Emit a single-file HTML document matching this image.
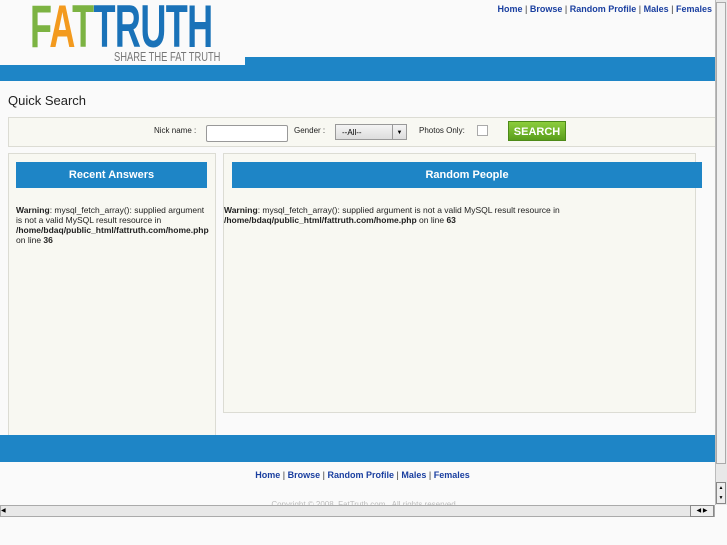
<!DOCTYPE html><html><head><style>
body{margin:0;width:727px;height:545px;background:#fafafa;font-family:"Liberation Sans",sans-serif;position:relative;overflow:hidden}
.a{position:absolute}
a{color:#1a3fa0;text-decoration:none;font-weight:bold}
.nav{font-size:9px;color:#333}
.box{background:#f8f8f2;border:1px solid #dcdcd4}
.hd{background:#1e85c6;color:#fff;font-weight:bold;font-size:11px;text-align:center}
.w{font-size:8.5px;color:#222;line-height:10px}
</style></head><body>
<div class="a" style="left:30px;top:-3px;font-size:60px;font-weight:bold;letter-spacing:-1px;line-height:60px;transform:scaleX(0.6);transform-origin:0 0;white-space:nowrap"><span style="color:#7cb342">F</span><span style="color:#f39a1e">A</span><span style="color:#7cb342">T</span><span style="color:#1a72b8">TRUTH</span></div>
<div class="a" style="left:114px;top:49px;font-size:13px;color:#777;transform:scaleX(0.72);transform-origin:0 0;white-space:nowrap">SHARE THE FAT TRUTH</div>
<div class="a nav" style="right:15px;top:4px"><a>Home</a> | <a>Browse</a> | <a>Random Profile</a> | <a>Males</a> | <a>Females</a></div>
<div class="a" style="left:0;top:65px;width:715px;height:16px;background:#1e85c6"></div>
<div class="a" style="left:245px;top:57px;width:470px;height:10px;background:#1e85c6"></div>
<div class="a" style="left:8px;top:93px;font-size:13px;color:#222">Quick Search</div>
<div class="a box" style="left:8px;top:117px;width:706px;height:28px"></div>
<div class="a" style="left:154px;top:126px;font-size:8px;color:#222">Nick name :</div>
<div class="a" style="left:206px;top:125px;width:80px;height:15px;background:#fff;border:1px solid #999;border-radius:2px"></div>
<div class="a" style="left:294px;top:126px;font-size:8px;color:#222">Gender :</div>
<div class="a" style="left:335px;top:124px;width:72px;height:16px;background:linear-gradient(#f4f4f4,#ddd);border:1px solid #999;font-size:8px;line-height:16px;box-sizing:border-box;padding-left:6px">--All--<span style="position:absolute;right:0;top:0;width:13px;height:14px;border-left:1px solid #999;text-align:center;font-size:6px">▼</span></div>
<div class="a" style="left:419px;top:126px;font-size:8px;color:#222">Photos Only:</div>
<div class="a" style="left:477px;top:125px;width:9px;height:9px;border:1px solid #aaa;background:#fff"></div>
<div class="a" style="left:508px;top:121px;width:58px;height:20px;background:linear-gradient(#8ccd3c,#5a9e1c);border:1px solid #4d8a18;color:#fff;font-weight:bold;font-size:11px;text-align:center;line-height:20px;box-sizing:border-box">SEARCH</div>
<div class="a box" style="left:8px;top:153px;width:206px;height:288px"></div>
<div class="a box" style="left:223px;top:153px;width:471px;height:258px"></div>
<div class="a hd" style="left:16px;top:162px;width:191px;height:26px;line-height:26px">Recent Answers</div>
<div class="a hd" style="left:232px;top:162px;width:470px;height:26px;line-height:26px">Random People</div>
<div class="a w" style="left:16px;top:205px;width:198px"><b>Warning</b>: mysql_fetch_array(): supplied argument<br>is not a valid MySQL result resource in <b>/home/bdaq/public_html/fattruth.com/home.php</b> on line <b>36</b></div>
<div class="a w" style="left:224px;top:205px;width:345px"><b>Warning</b>: mysql_fetch_array(): supplied argument is not a valid MySQL result resource in<br><b>/home/bdaq/public_html/fattruth.com/home.php</b> on line <b>63</b></div>
<div class="a" style="left:0;top:435px;width:715px;height:27px;background:#1e85c6"></div>
<div class="a nav" style="left:0;width:725px;top:470px;text-align:center"><a>Home</a> | <a>Browse</a> | <a>Random Profile</a> | <a>Males</a> | <a>Females</a></div>
<div class="a" style="left:0;width:727px;top:500px;text-align:center;font-size:8px;color:#bbb">Copyright © 2008 &nbsp;FatTruth.com &nbsp; All rights reserved</div>
<div class="a" style="left:715px;top:0;width:12px;height:505px;background:#e8e8e8;border-left:1px solid #bbb"></div>
<div class="a" style="left:716px;top:2px;width:10px;height:462px;background:#f0f0f0;border:1px solid #aaa;box-sizing:border-box"></div>
<div class="a" style="left:716px;top:482px;width:10px;height:22px;background:#eee;border:1px solid #888;box-sizing:border-box;font-size:5px;text-align:center;line-height:10px">▲<br>▼</div>
<div class="a" style="left:0;top:505px;width:715px;height:12px;background:#e8e8e8;border:1px solid #aaa;box-sizing:border-box"></div>
<div class="a" style="left:690px;top:505px;width:24px;height:12px;background:#eee;border:1px solid #888;box-sizing:border-box;font-size:6px;line-height:10px;text-align:center">◀ ▶</div>
<div class="a" style="left:1px;top:506px;font-size:6px;line-height:10px">◀</div>
</body></html>
